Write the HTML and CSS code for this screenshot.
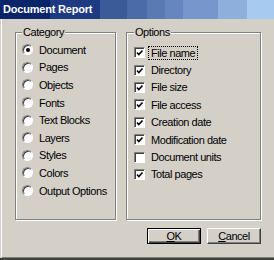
FILE: index.html
```html
<!DOCTYPE html>
<html lang="en">
<head>
    <meta charset="UTF-8">
    <title>Document Report</title>
    <link rel="stylesheet" href="styles.css">
</head>
<body>
    <div class="window">
        <div class="titlebar">Document Report</div>
        <div class="client">
            <div class="groups">
                <fieldset class="group category">
                    <legend>Category</legend>
                    <label class="row"><span class="radio checked"></span>Document</label>
                    <label class="row"><span class="radio"></span>Pages</label>
                    <label class="row"><span class="radio"></span>Objects</label>
                    <label class="row"><span class="radio"></span>Fonts</label>
                    <label class="row"><span class="radio"></span>Text Blocks</label>
                    <label class="row"><span class="radio"></span>Layers</label>
                    <label class="row"><span class="radio"></span>Styles</label>
                    <label class="row"><span class="radio"></span>Colors</label>
                    <label class="row"><span class="radio"></span>Output Options</label>
                </fieldset>
                <fieldset class="group options">
                    <legend>Options</legend>
                    <label class="row"><span class="check on"></span><span class="text focus">File name</span></label>
                    <label class="row"><span class="check on"></span><span class="text">Directory</span></label>
                    <label class="row"><span class="check on"></span><span class="text">File size</span></label>
                    <label class="row"><span class="check on"></span><span class="text">File access</span></label>
                    <label class="row"><span class="check on"></span><span class="text">Creation date</span></label>
                    <label class="row"><span class="check on"></span><span class="text">Modification date</span></label>
                    <label class="row"><span class="check"></span><span class="text">Document units</span></label>
                    <label class="row"><span class="check on"></span><span class="text">Total pages</span></label>
                </fieldset>
            </div>
            <div class="buttons">
                <button class="btn default"><u>O</u>K</button>
                <button class="btn"><u>C</u>ancel</button>
            </div>
        </div>
    </div>
</body>
</html>
```

FILE: styles.css
```css
body {
    margin: 0;
    background-color: #d4d0c8;
    font-family: "Liberation Sans", Arial, sans-serif;
    font-size: 11px;
    letter-spacing: -0.45px;
    color: #000;
}

.window {
    width: 274px;
    height: 260px;
    box-sizing: border-box;
    display: flex;
    flex-direction: column;
    border-bottom: 2px solid #404040;
}

/* banded gradient, like a 16-bit colour screen */
.titlebar {
    height: 19px;
    line-height: 19px;
    padding-left: 3px;
    color: #fff;
    font-weight: bold;
    font-size: 11px;
    letter-spacing: -0.2px;
    background: linear-gradient(to right,
        #0a246a 0, #0a246a 50px,
        #1e3a82 50px, #1e3a82 100px,
        #3a5a98 100px, #3a5a98 127px,
        #4a6aa8 127px, #4a6aa8 147px,
        #5a7ab4 147px, #5a7ab4 165px,
        #6686c0 165px, #6686c0 183px,
        #7696cc 183px, #7696cc 218px,
        #8eaedc 218px, #8eaedc 247px,
        #a6caf0 247px);
}

.client {
    flex: 1;
    margin-left: 1px;
    border-left: 1px solid #fff;
    border-bottom: 1px solid #808080;
    padding: 6px 0 0 13px;
}

.groups {
    display: flex;
    gap: 10px;
}

.group {
    margin: 0;
    padding: 2px 0 0 6px;
    height: 195px;
    box-sizing: border-box;
    border: 1px solid #808080;
    box-shadow: inset 1px 1px #fff, 1px 1px #fff;
    min-width: 0;
}

.category {
    width: 101px;
}

.options {
    width: 135px;
    padding-left: 7px;
    padding-top: 5px;
}

.group legend {
    margin-left: 0;
    padding: 0 1px;
    line-height: 14px;
    background-color: #d4d0c8;
}

.row {
    display: flex;
    align-items: center;
    height: 17.6px;
    white-space: nowrap;
}

.options .row {
    height: 17.4px;
}

.radio {
    width: 11px;
    height: 11px;
    flex-shrink: 0;
    box-sizing: border-box;
    border-radius: 50%;
    background-color: #fff;
    border: 1px solid;
    border-color: #808080 #fff #fff #808080;
    box-shadow: inset 1px 1px #404040;
    margin-right: 6px;
    display: flex;
    align-items: center;
    justify-content: center;
}

.radio.checked::after {
    content: "";
    width: 4px;
    height: 4px;
    border-radius: 50%;
    background-color: #000;
}

.check {
    width: 11px;
    height: 11px;
    flex-shrink: 0;
    box-sizing: border-box;
    background-color: #fff;
    border: 1px solid;
    border-color: #808080 #fff #fff #808080;
    box-shadow: inset 1px 1px #404040;
    margin-right: 3px;
}

.check.on {
    background: #fff url("data:image/svg+xml,%3Csvg xmlns='http://www.w3.org/2000/svg' width='9' height='9'%3E%3Cpath d='M2 4.5 L3.8 6.5 L7.5 2.5' fill='none' stroke='%23000' stroke-width='1.6'/%3E%3C/svg%3E") no-repeat center;
}

.text {
    padding: 0 2px;
    border: 1px solid transparent;
    line-height: 12px;
}

.text.focus {
    border: 1px dotted #000;
}

.buttons {
    display: flex;
    justify-content: flex-end;
    gap: 6px;
    width: 246px;
    margin-top: 8px;
}

.btn {
    width: 54px;
    height: 16px;
    padding: 0;
    box-sizing: border-box;
    font-family: inherit;
    font-size: 11px;
    letter-spacing: -0.45px;
    line-height: 12px;
    background-color: #d4d0c8;
    color: #000;
    border: 1px solid;
    border-color: #fff #404040 #404040 #fff;
    box-shadow: inset -1px -1px #808080;
}

.btn.default {
    border: 1px solid #000;
    box-shadow: inset 1px 1px #fff, inset -1px -1px #404040, inset -2px -2px #808080;
}
```
